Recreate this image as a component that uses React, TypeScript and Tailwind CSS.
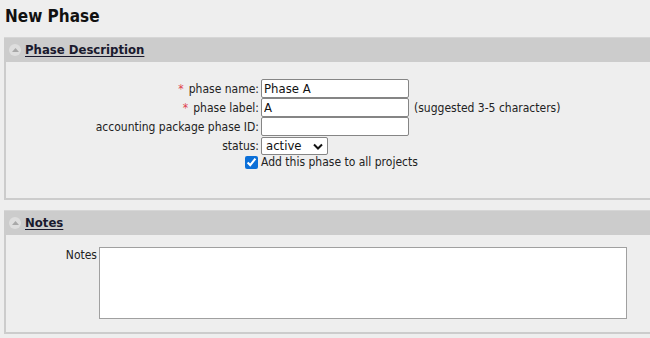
import React from "react";

const SectionHeader: React.FC<{ title: string }> = ({ title }) => (
  <div className="flex h-[25px] items-center border-t border-[#d6d6d6] bg-[#cccccc] pl-[5px]">
    <span className="flex h-[12px] w-[12px] items-center justify-center rounded-full bg-[#dedede]">
      <svg width="7" height="4" viewBox="0 0 7 4">
        <path d="M3.5 0 L7 4 L0 4 Z" fill="#a8a8a8" />
      </svg>
    </span>
    <span className="ml-[4px] text-[13px] font-bold text-[#1a1a2e] underline underline-offset-2">
      {title}
    </span>
  </div>
);

const Row: React.FC<{ label: string; required?: boolean; children: React.ReactNode }> = ({
  label,
  required,
  children,
}) => (
  <div className="flex h-[19px] items-center">
    <div className="w-[255px] pr-[2px] text-right">
      {required && <span className="mr-[5px] text-[#e0424b]">*</span>}
      {label}
    </div>
    {children}
  </div>
);

const inputCls =
  "h-[19px] w-[148px] rounded-[2px] border border-[#858585] bg-white px-[2px] text-[13px] text-[#111] outline-none";

export default function App() {
  return (
    <div className="h-[338px] w-[650px] overflow-hidden bg-[#eeeeee] font-['DejaVu_Sans_Condensed','DejaVu_Sans',sans-serif] text-[12px] text-[#222]">
      <h1 className="h-[37px] px-[5px] pt-[4px] text-[17px] font-bold text-[#111]">New Phase</h1>

      <div className="ml-[4px] w-[660px]">
        <SectionHeader title="Phase Description" />
        <div className="h-[138px] border-x-2 border-b-2 border-[#cccccc] pt-[17px]">
          <Row label="phase name:" required>
            <input className={inputCls} defaultValue="Phase A" />
          </Row>
          <Row label="phase label:" required>
            <input className={inputCls} defaultValue="A" />
            <span className="ml-[5px]">(suggested 3-5 characters)</span>
          </Row>
          <Row label="accounting package phase ID:">
            <input className={inputCls} defaultValue="" />
          </Row>
          <Row label="status:">
            <div className="relative">
              <select className="h-[18px] w-[67px] appearance-none rounded-[2px] border border-[#858585] bg-white pl-[4px] text-[13px] leading-[16px] text-[#111]">
                <option>active</option>
                <option>inactive</option>
              </select>
              <svg
                className="pointer-events-none absolute right-[5px] top-[6px]"
                width="10"
                height="7"
                viewBox="0 0 10 7"
              >
                <path d="M1 1.5 L5 5.5 L9 1.5" fill="none" stroke="#111" strokeWidth="2" />
              </svg>
            </div>
          </Row>
          <div className="flex h-[14px] items-center pl-[239px]">
            <input type="checkbox" defaultChecked className="h-[13px] w-[13px] accent-[#0b6fd8]" />
            <span className="ml-[3px]">Add this phase to all projects</span>
          </div>
        </div>
      </div>

      <div className="ml-[4px] mt-[10px] w-[660px]">
        <SectionHeader title="Notes" />
        <div className="flex h-[99px] border-x-2 border-b-2 border-[#cccccc] pt-[12px]">
          <div className="-mt-[1px] w-[93px] pr-[2px] text-right">Notes</div>
          <textarea className="h-[72px] w-[528px] resize-none border border-[#a0a0a0] bg-white" />
        </div>
      </div>
    </div>
  );
}
